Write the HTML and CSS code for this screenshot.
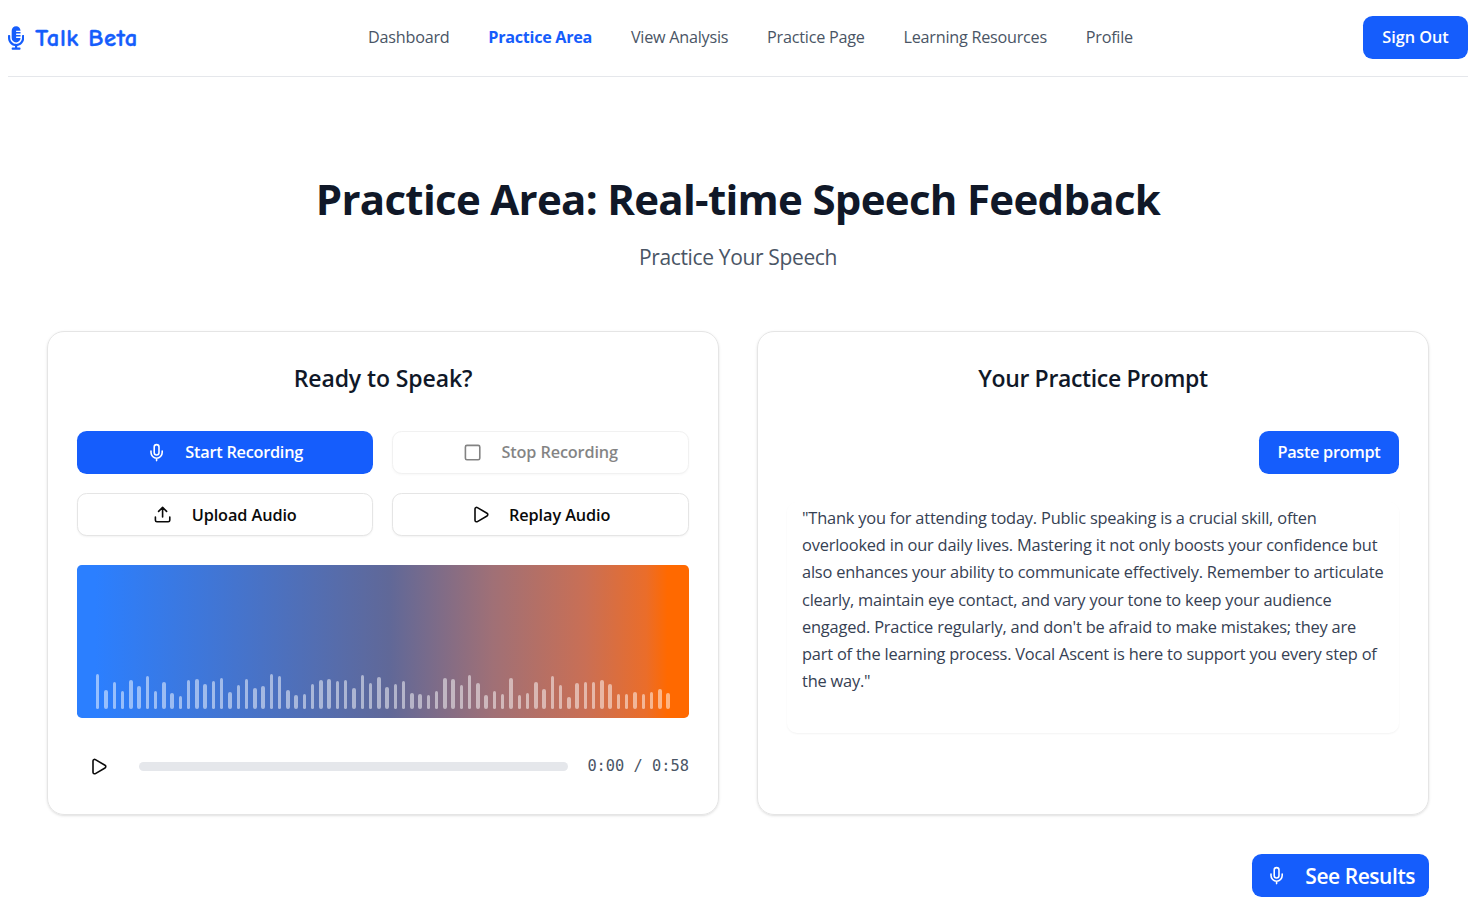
FILE: index.html
```html
<!DOCTYPE html>
<html lang="en">
<head>
<meta charset="utf-8">
<title>Talk Beta</title>
<link rel="stylesheet" href="styles.css">
</head>
<body>
<svg width="0" height="0" class="defs">
  <symbol id="mic" viewBox="0 0 24 24"><path d="M12 19v3M19 10v2a7 7 0 0 1-14 0v-2"/><rect x="9" y="2" width="6" height="13" rx="3"/></symbol>
  <symbol id="play" viewBox="0 0 24 24"><path d="M5 5a2 2 0 0 1 3.008-1.728l11.997 6.998a2 2 0 0 1 .003 3.458l-12 7A2 2 0 0 1 5 19z"/></symbol>
</svg>
<div class="page">
  <header class="header">
    <a class="logo"><svg class="logo-icon" viewBox="0 0 352 512"><path d="M336 192h-16c-8.84 0-16 7.16-16 16v48c0 74.8-64.49 134.82-140.79 127.38C96.71 376.89 48 317.11 48 250.3V208c0-8.84-7.16-16-16-16H16c-8.84 0-16 7.16-16 16v40.16c0 89.64 63.97 169.55 152 181.69V464H96c-8.84 0-16 7.16-16 16v16c0 8.84 7.16 16 16 16h160c8.84 0 16-7.16 16-16v-16c0-8.84-7.16-16-16-16h-56v-33.77C285.71 418.47 352 344.9 352 256v-48c0-8.84-7.16-16-16-16zM176 352c53.02 0 96-42.98 96-96h-85.33c-5.89 0-10.67-3.58-10.67-8v-16c0-4.42 4.78-8 10.67-8H272v-32h-85.33c-5.89 0-10.67-3.58-10.67-8v-16c0-4.42 4.78-8 10.67-8H272v-32h-85.33c-5.89 0-10.67-3.58-10.67-8v-16c0-4.42 4.78-8 10.67-8H272c0-53.02-42.98-96-96-96S80 42.98 80 96v160c0 53.02 42.98 96 96 96z"/></svg><span class="logo-text">Talk Beta</span></a>
    <nav class="nav">
      <a>Dashboard</a><a class="active">Practice Area</a><a>View Analysis</a><a>Practice Page</a><a>Learning Resources</a><a>Profile</a>
    </nav>
    <button class="btn primary signout">Sign Out</button>
  </header>
  <main class="main">
    <h1 class="title">Practice Area: Real-time Speech Feedback</h1>
    <p class="subtitle">Practice Your Speech</p>
    <div class="cards">
      <section class="card">
        <h2 class="card-title ready">Ready to Speak?</h2>
        <div class="actions">
          <button class="btn primary"><svg class="icon"><use href="#mic"/></svg><span>Start Recording</span></button>
          <button class="btn outline disabled"><svg class="icon" viewBox="0 0 24 24"><rect x="3" y="3" width="18" height="18" rx="2"/></svg><span>Stop Recording</span></button>
          <button class="btn outline low"><svg class="icon" viewBox="0 0 24 24"><path d="M12 3v12M17 8l-5-5-5 5M21 15v4a2 2 0 0 1-2 2H5a2 2 0 0 1-2-2v-4"/></svg><span>Upload Audio</span></button>
          <button class="btn outline low"><svg class="icon"><use href="#play"/></svg><span>Replay Audio</span></button>
        </div>
        <div class="wave" id="wave"></div>
        <div class="player">
          <button class="play"><svg class="icon"><use href="#play"/></svg></button>
          <div class="track"></div>
          <span class="time">0:00 / 0:58</span>
        </div>
      </section>
      <section class="card">
        <h2 class="card-title">Your Practice Prompt</h2>
        <div class="paste-row"><button class="btn primary paste">Paste prompt</button></div>
        <p class="prompt">"Thank you for attending today. Public speaking is a crucial skill, often<br>overlooked in our daily lives. Mastering it not only boosts your confidence but<br>also enhances your ability to communicate effectively. Remember to articulate<br>clearly, maintain eye contact, and vary your tone to keep your audience<br>engaged. Practice regularly, and don't be afraid to make mistakes; they are<br>part of the learning process. Vocal Ascent is here to support you every step of<br>the way."</p>
      </section>
    </div>
    <div class="results-row"><button class="btn primary results"><svg class="icon"><use href="#mic"/></svg><span>See Results</span></button></div>
  </main>
</div>
<script src="wave.js"></script>
</body>
</html>
```
FILE: styles.css
```css
* { box-sizing: border-box; }
body { margin: 0; background: #fff; overflow: hidden; font-family: "Open Sans", "Noto Sans", sans-serif; font-size: 16.8px; color: #101828; }
.defs { position: absolute; }
.page { width: 1476px; padding: 0 8px; white-space: nowrap; }
.header { height: 77px; border-bottom: 1px solid #e5e7eb; display: flex; align-items: flex-start; justify-content: space-between; padding-top: 16px; }
.logo { display: flex; align-items: center; gap: 11px; height: 43px; width: 130px; color: #155dfc; }
.logo-icon { width: 18px; height: 24px; fill: currentColor; }
.logo-text { font-family: "Comic Sans MS", "Comic Neue", Lato, sans-serif; font-weight: 700; font-size: 24.7px; letter-spacing: 0.6px; -webkit-text-stroke: 0.4px currentColor; }
.nav { display: flex; gap: 38.9px; height: 41px; align-items: center; color: #4a5565; font-size: 16.2px; letter-spacing: -0.24px; }
.active { color: #155dfc; font-weight: 700; letter-spacing: -0.3px; }
.btn { height: 43px; border: 0; border-radius: 9.6px; display: flex; align-items: center; justify-content: center; gap: 19.2px; font: 600 16.3px "Open Sans", "Noto Sans", sans-serif; letter-spacing: -0.25px; padding: 0; white-space: nowrap; }
.btn span { margin-top: -1px; }
.primary { background: #155dfc; color: #fff; }
.outline { background: #fff; color: #0a0a0a; border: 1px solid #e5e5e5; box-shadow: 0 1px 2px rgba(0,0,0,.05); }
.low { letter-spacing: -0.1px; }
.btn.low { padding-top: 1px; }
.disabled { opacity: .5; letter-spacing: -0.15px; }
.signout { width: 105px; padding-bottom: 1px; letter-spacing: -0.05px; }
.icon { width: 19.2px; height: 19.2px; fill: none; stroke: currentColor; stroke-width: 2; stroke-linecap: round; stroke-linejoin: round; flex: none; }
.main { padding: 95px 39px 0; }
.title { margin: 0; height: 54px; line-height: 54px; text-align: center; font-size: 42px; font-weight: 700; letter-spacing: -0.7px; }
.subtitle { margin: 14px 0 0; height: 34px; line-height: 34px; text-align: center; font-size: 21px; color: #4a5565; letter-spacing: -0.35px; }
.cards { margin-top: 57px; display: grid; grid-template-columns: repeat(2, minmax(0, 1fr)); gap: 38px; }
.card { height: 484px; border: 1px solid #e5e5e5; border-radius: 17px; padding: 29px; box-shadow: 0 1px 3px rgba(0,0,0,.1), 0 1px 2px -1px rgba(0,0,0,.1); }
.card-title { margin: 0 0 35px; height: 35px; line-height: 35px; text-align: center; font-size: 23px; font-weight: 600; letter-spacing: -0.35px; }
.ready { letter-spacing: -0.1px; }
.actions { display: grid; grid-template-columns: 296px 297px; gap: 19px; }
.wave { margin-top: 29px; height: 153px; border-radius: 4.8px; background: linear-gradient(90deg, #2b7fff 3%, #606898 51%, #a07076 68%, #c96f55 83%, #ea6d2a 93%, #ff6900 96.5%); display: flex; align-items: flex-end; gap: 4.8px; padding: 0 19px 9px; }
.bar { flex: 1; border-radius: 2px; background: rgba(255,255,255,.5); }
.player { margin-top: 27px; height: 43px; display: flex; align-items: center; }
.play { width: 43px; height: 43px; padding: 0; border: 0; background: none; display: flex; align-items: center; justify-content: center; color: #0a0a0a; }
.track { width: 429px; height: 9px; margin-left: 19px; border-radius: 5px; background: #e5e7eb; }
.time { margin: -2px 0 0 19.5px; font: 15.35px "DejaVu Sans Mono", monospace; color: #4a5565; }
.paste-row { display: flex; justify-content: flex-end; }
.paste { width: 140px; padding-bottom: 1px; letter-spacing: -0.3px; }
.prompt { margin: 28px 0 0; height: 231px; padding: 2px 15px; border-radius: 10px; box-shadow: 0 1px 2px rgba(0,0,0,.05); color: #364153; font-size: 16.4px; line-height: 27.2px; letter-spacing: -0.2px; }
.results-row { display: flex; justify-content: flex-end; margin-top: 39px; }
.results { width: 177px; font-size: 21px; letter-spacing: -0.45px; padding: 1px 0 0 1px; }
```
FILE: wave.js
```js
// Bar heights in thirds of a pixel.
const levels = [105,57,81,54,87,69,99,54,81,48,39,87,90,75,84,93,51,72,90,63,69,105,99,57,42,45,75,87,90,84,87,63,102,78,96,66,75,84,48,45,42,54,93,90,72,102,78,42,54,45,93,42,48,81,60,99,72,36,78,81,81,87,75,45,45,51,45,51,60,48];
const wave = document.getElementById('wave');
for (const level of levels) {
  const bar = document.createElement('div');
  bar.className = 'bar';
  bar.style.height = level / 3 + 'px';
  wave.appendChild(bar);
}
```
